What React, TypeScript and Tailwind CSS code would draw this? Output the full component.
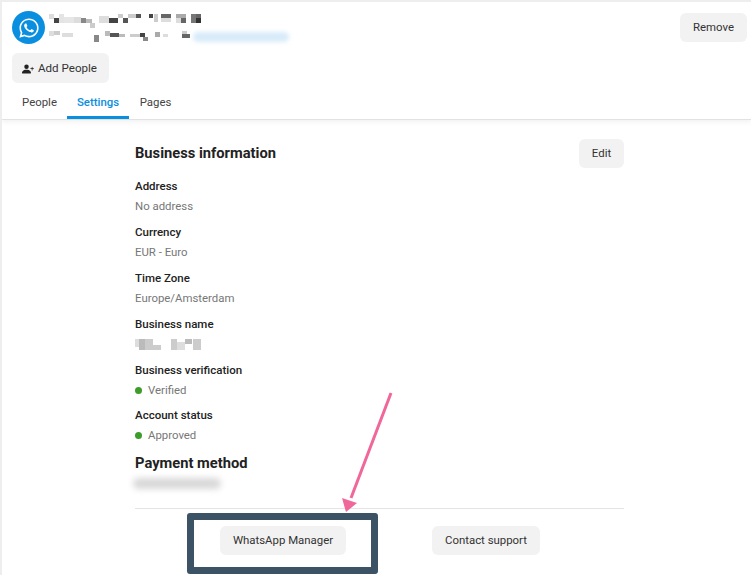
import { FaWhatsapp } from "react-icons/fa";
import { BsPersonPlusFill } from "react-icons/bs";

// pixelated redaction blocks: x, y, w, h, fill
const nameBlocks: [number, number, number, number, string][] = [
  [0, 0, 5, 5, "#ddd"], [5, 4, 5, 5, "#444"], [10, 0, 5, 9, "#e4e4e4"], [15, 3, 10, 6, "#e6e6e6"], [25, 3, 7, 6, "#ddd"],
  [32, 4, 5, 5, "#888"], [37, 5, 6, 4, "#bbb"], [41, 9, 5, 5, "#ccc"], [50, 2, 10, 7, "#ddd"],
  [60, 4, 9, 5, "#444"], [69, 0, 5, 4, "#ccc"], [74, 4, 5, 5, "#555"], [79, 0, 8, 4, "#ccc"],
  [87, 0, 5, 4, "#555"], [100, 0, 4, 4, "#444"], [105, 0, 4, 8, "#ccc"], [112, 0, 10, 4, "#666"],
  [112, 4, 10, 4, "#ddd"], [127, 0, 10, 4, "#aaa"], [127, 4, 5, 5, "#ddd"], [132, 4, 5, 5, "#666"],
  [142, 0, 5, 9, "#777"], [147, 0, 5, 4, "#666"], [147, 4, 5, 5, "#333"],
];
const detailBlocks: [number, number, number, number, string][] = [
  [0, 0, 5, 5, "#ddd"], [5, 0, 6, 4, "#ccc"], [13, 2, 11, 4, "#ddd"], [45, 4, 5, 10, "#888"],
  [56, 0, 5, 5, "#bbb"], [61, 2, 9, 4, "#555"], [70, 3, 6, 3, "#bbb"], [81, 3, 10, 3, "#ccc"],
  [91, 2, 5, 4, "#444"], [94, 6, 5, 4, "#888"], [106, 1, 5, 5, "#aaa"], [114, 3, 5, 3, "#ddd"],
  [133, 0, 5, 5, "#ccc"], [133, 3, 8, 4, "#666"],
];
const businessBlocks: [number, number, number, number, string][] = [
  [0, 0, 4, 8, "#ddd"], [4, 0, 6, 11, "#bbb"], [10, 0, 8, 11, "#ccc"], [18, 6, 8, 5, "#ccc"],
  [36, 0, 6, 11, "#ccc"], [42, 3, 8, 8, "#ddd"], [50, 0, 7, 5, "#bbb"], [58, 0, 8, 11, "#ccc"],
];

const Mosaic = ({ blocks, w, h }: { blocks: [number, number, number, number, string][]; w: number; h: number }) => (
  <svg width={w} height={h} viewBox={`0 0 ${w} ${h}`} className="blur-[0.7px]">
    {blocks.map(([x, y, bw, bh, fill], i) => (
      <rect key={i} x={x} y={y} width={bw} height={bh} fill={fill} />
    ))}
  </svg>
);

const GreyButton = ({ label, className }: { label: string; className: string }) => (
  <button className={`h-[29px] rounded-md bg-[#f2f2f2] text-[11.4px] font-normal text-[#333] ${className}`}>{label}</button>
);

const Field = ({ label, value, dot }: { label: string; value?: string; dot?: boolean }) => (
  <div className="h-[45.8px]">
    <div className="flex h-5 items-center text-[11.5px] font-medium text-[#222]">{label}</div>
    {value && (
      <div className="flex h-5 items-center gap-[5px] text-[11.4px] text-[#777]">
        {dot && <span className="h-[7px] w-[7px] rounded-full bg-[#3c9d28]" />}
        <span className={dot ? "ml-px" : ""}>{value}</span>
      </div>
    )}
    {!value && (
      <div className="flex h-5 items-center">
        <Mosaic blocks={businessBlocks} w={68} h={11} />
      </div>
    )}
  </div>
);

export default function App() {
  return (
    <div className="relative h-[575px] w-[751px] overflow-hidden border-l-2 border-t-2 border-[#eeeeee] bg-white font-['Roboto',sans-serif]">
      {/* Header */}
      <div className="relative h-[118px] border-b border-[#e2e2e2] shadow-[0_2px_5px_rgba(0,0,0,0.06)]">
        <div className="flex justify-between pl-[10px] pr-[4px] pt-[9px]">
          <div className="flex items-center gap-[4px]">
            <div className="flex h-[33px] w-[33px] items-center justify-center rounded-full bg-[#0a8ee0]">
              <FaWhatsapp className="h-[22px] w-[22px] text-white" />
            </div>
            <div className="flex flex-col gap-[3px]">
              <Mosaic blocks={nameBlocks} w={154} h={14} />
              <div className="flex items-start">
                <Mosaic blocks={detailBlocks} w={146} h={11} />
                <div className="-ml-[2px] mt-[1px] h-[10px] w-[96px] rounded-full bg-[#d8ebf9] blur-[2px]" />
              </div>
            </div>
          </div>
          <GreyButton label="Remove" className="mt-[2px] w-[67px]" />
        </div>
        <div className="mt-[9px] pl-[10px]">
          <button className="flex h-[30px] w-[97px] items-center gap-[4px] rounded-md bg-[#f2f2f2] pl-[10px] pt-px text-[11.6px] text-[#333]">
            <BsPersonPlusFill className="h-[12px] w-[12px] text-[#222]" />
            <span>Add People</span>
          </button>
        </div>
        <div className="mt-[4px] flex pl-[10px] text-[11.4px]">
          <div className="flex h-[32px] w-[55px] items-center justify-center text-[#444]">People</div>
          <div className="flex h-[32px] w-[62px] items-center justify-center border-b-[3px] border-[#0a8ee0] pt-[3px] font-medium text-[#0a8ee0]">Settings</div>
          <div className="flex h-[32px] w-[53px] items-center justify-center text-[#444]">Pages</div>
        </div>
      </div>

      {/* Business information */}
      <div className="ml-[133px] w-[489px] pt-[19px]">
        <div className="flex items-center justify-between">
          <h2 className="text-[14.7px] font-bold text-[#222]">Business information</h2>
          <GreyButton label="Edit" className="w-[45px]" />
        </div>
        <div className="mt-[9px]">
          <Field label="Address" value="No address" />
          <Field label="Currency" value="EUR - Euro" />
          <Field label="Time Zone" value="Europe/Amsterdam" />
          <Field label="Business name" />
          <Field label="Business verification" value="Verified" dot />
          <Field label="Account status" value="Approved" dot />
        </div>
        <h2 className="flex h-[22px] items-center text-[14.7px] font-bold text-[#222]">Payment method</h2>
        <div className="mt-[4px] -ml-[2px] h-[11px] w-[88px] rounded-full bg-[#d8d8d8] blur-[3px]" />
        <div className="mt-[19px] h-px bg-[#e4e4e4]" />
      </div>
      <div className="mt-[17px] ml-[218px] flex">
        <GreyButton label="WhatsApp Manager" className="w-[126px]" />
        <GreyButton label="Contact support" className="ml-[86px] w-[108px]" />
      </div>

      {/* Annotation overlay */}
      <div className="absolute left-[185px] top-[511px] h-[61px] w-[191px] rounded-[3px] border-[7px] border-[#3b5365]" />
      <svg className="absolute left-[-2px] top-[-2px]" width={751} height={575} viewBox="0 0 751 575" fill="none">
        <line x1="391" y1="393" x2="351" y2="498" stroke="#f0679a" strokeWidth="3" />
        <polygon points="346,512 342,498 357,503" fill="#f0679a" />
      </svg>
    </div>
  );
}
